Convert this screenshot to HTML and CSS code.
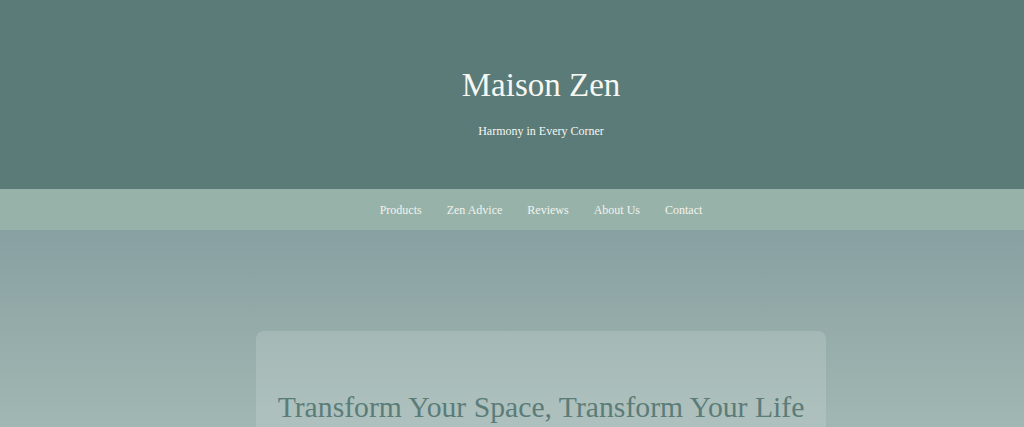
FILE: index.html
```html
<!DOCTYPE html>
<html lang="en">
<head>
<meta charset="utf-8">
<title>Maison Zen</title>
<link rel="stylesheet" href="styles.css">
</head>
<body>
<header class="site-header">
  <h1 class="brand">Maison Zen</h1>
  <p class="tagline">Harmony in Every Corner</p>
</header>
<nav class="site-nav">
  <a href="#">Products</a>
  <a href="#">Zen Advice</a>
  <a href="#">Reviews</a>
  <a href="#">About Us</a>
  <a href="#">Contact</a>
</nav>
<main class="site-main">
  <section class="hero-card">
    <h2 class="hero-title">Transform Your Space, Transform Your Life</h2>
  </section>
</main>
</body>
</html>
```

FILE: styles.css
```css
* { box-sizing: border-box; }
html, body { margin: 0; padding: 0; }
body {
  font-family: "Liberation Serif", "Times New Roman", serif;
  background: #b5c8c3;
  overflow: hidden;
}
.site-header {
  background: #5a7b78;
  color: #f6f6f2;
  text-align: center;
  padding: 66px 0 51px 58px;
}
.brand {
  margin: 0;
  font-size: 33px;
  line-height: 38px;
  font-weight: normal;
}
.tagline {
  margin: 20px 0 0;
  font-size: 12px;
  line-height: 14px;
}
.site-nav {
  background: #97b3a9;
  display: flex;
  justify-content: center;
  gap: 25px;
  padding: 15px 0 13px 58px;
  height: 41px;
}
.site-nav a {
  color: #f2f2ee;
  text-decoration: none;
  font-size: 12px;
  line-height: 13px;
}
.site-main {
  min-height: 600px;
  padding: 101px 0 40px 58px;
  display: flex;
  justify-content: center;
  align-items: flex-start;
  background: linear-gradient(to bottom, #88a0a1 0px, #a1b7b3 197px, #b5c8c3 420px);
}
.hero-card {
  width: 570px;
  padding: 59px 20px 40px;
  background: rgba(255, 255, 255, 0.15);
  border-radius: 8px;
  text-align: center;
}
.hero-title {
  margin: 0;
  font-size: 29.7px;
  line-height: 34px;
  font-weight: normal;
  color: #5b7c79;
  white-space: nowrap;
}
```
